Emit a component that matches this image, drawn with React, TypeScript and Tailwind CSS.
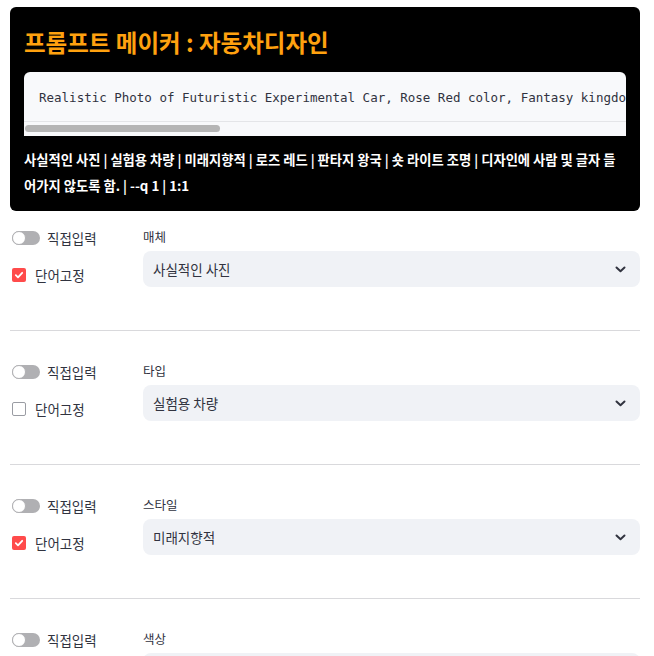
import React from "react";

function Toggle() {
  return (
    <div className="relative ml-[2px] h-[14px] w-[28px] rounded-full bg-[#b0b0b3]">
      <div className="absolute left-0 top-0 h-[14px] w-[14px] rounded-full border border-[#b0b0b3] bg-white" />
    </div>
  );
}

function Checkbox({ checked }: { checked: boolean }) {
  if (checked) {
    return (
      <div className="ml-[2px] flex h-[14px] w-[14px] items-center justify-center rounded-[2px] bg-[#ff4b4b]">
        <svg width="10" height="10" viewBox="0 0 10 10" fill="none">
          <polyline points="1.8,5.2 4,7.3 8.2,2.8" stroke="white" strokeWidth="1.8" strokeLinecap="round" strokeLinejoin="round" />
        </svg>
      </div>
    );
  }
  return <div className="ml-[2px] h-[14px] w-[14px] rounded-[2px] border border-[#9a9ca3] bg-white" />;
}

function Chevron() {
  return (
    <svg width="11" height="7" viewBox="0 0 11 7" fill="none">
      <polyline points="1.5,1.5 5.5,5.2 9.5,1.5" stroke="#31333f" strokeWidth="2" strokeLinecap="round" strokeLinejoin="round" />
    </svg>
  );
}

function Section({ label, value, checked, first }: { label: string; value: string; checked: boolean; first?: boolean }) {
  return (
    <div>
      <div className={"flex " + (first ? "mt-[17px]" : "mt-[31px]")}>
        <div className="w-[133px] shrink-0">
          <div className="flex h-[20px] items-center gap-[7px]">
            <Toggle />
            <span className="text-[13.5px] leading-[20px] text-[#31333f]">직접입력</span>
          </div>
          <div className="mt-[17px] flex h-[20px] items-center gap-[9px]">
            <Checkbox checked={checked} />
            <span className="text-[13.5px] leading-[20px] text-[#31333f]">단어고정</span>
          </div>
        </div>
        <div className="flex-1">
          <div className="h-[18px] text-[12.5px] leading-[18px] text-[#31333f]">{label}</div>
          <div className="mt-[5px] flex h-[36px] items-center justify-between rounded-[8px] bg-[#f0f2f6] pl-[10px] pr-[14px]">
            <span className="text-[13.5px] text-[#31333f]">{value}</span>
            <Chevron />
          </div>
        </div>
      </div>
      <div className="mt-[43px] h-px bg-[#d9d9dc]" />
    </div>
  );
}

export default function App() {
  return (
    <div className="min-h-[656px] w-[654px] overflow-hidden bg-white pl-[10px] pr-[14px] pt-[7px] font-['Noto_Sans_CJK_KR','Noto_Sans',sans-serif]">
      <div className="rounded-[6px] bg-black px-[14px] pb-[12px] pt-[20px]">
        <h1 className="text-[23.5px] font-bold leading-[31px] text-[#ffa10f]">프롬프트 메이커 : 자동차디자인</h1>
        <div className="mt-[14px] overflow-hidden rounded-t-[6px] bg-[#f8f9fb]">
          <div className="flex h-[49px] items-center overflow-hidden whitespace-nowrap pl-[15px] pt-[3px] font-['DejaVu_Sans_Mono',monospace] text-[12.5px] text-[#31333f]">
            Realistic Photo of Futuristic Experimental Car, Rose Red color, Fantasy kingdom, Shot Light lighting, No humans and letters in the design. --q 1 --ar 1:1
          </div>
          <div className="h-[15px] border-t border-[#e4e5e8] pl-[1px] pt-[3px]">
            <div className="h-[7px] w-[195px] rounded-full bg-[#b5b5b5]" />
          </div>
        </div>
        <p className="mt-[11px] text-[13.3px] font-semibold leading-[26px] text-white">
          사실적인 사진 | 실험용 차량 | 미래지향적 | 로즈 레드 | 판타지 왕국 | 숏 라이트 조명 | 디자인에 사람 및 글자 들어가지 않도록 함. | --q 1 | 1:1
        </p>
      </div>
      <Section first label="매체" value="사실적인 사진" checked={true} />
      <Section label="타입" value="실험용 차량" checked={false} />
      <Section label="스타일" value="미래지향적" checked={true} />
      <Section label="색상" value="로즈 레드" checked={true} />
    </div>
  );
}
